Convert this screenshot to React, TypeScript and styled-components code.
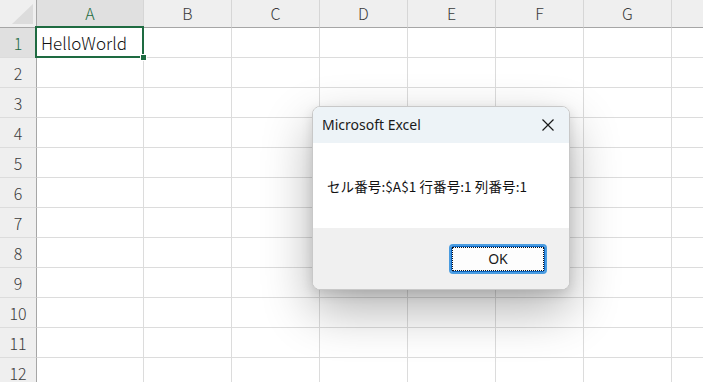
import React from "react";
import styled, { createGlobalStyle } from "styled-components";

const GlobalStyle = createGlobalStyle`
  html, body { margin: 0; padding: 0; background: #ffffff; overflow: hidden; }
  body { width: 703px; height: 382px; }
  * { box-sizing: border-box; }
`;

const COLS = ["A", "B", "C", "D", "E", "F", "G", "H"];
const ROWS = Array.from({ length: 12 }, (_, i) => i + 1);

const Page = styled.div`
  position: relative;
  width: 703px;
  height: 382px;
  overflow: hidden;
  font-family: "Noto Sans CJK JP", "Noto Sans", sans-serif;
`;

const Sheet = styled.div`
  display: grid;
  grid-template-columns: 37px 107px repeat(7, 88px);
  grid-template-rows: 28px repeat(12, 30px);
  background: #ffffff;
`;

const Corner = styled.div`
  position: relative;
  background: #efefef;
  border-right: 1px solid #a6a6a6;
  border-bottom: 1px solid #a6a6a6;
  display: flex;
  align-items: flex-end;
  justify-content: flex-end;
  padding: 0 3px 3px 0;
`;

const CornerTriangle = styled.div`
  width: 21px;
  height: 20px;
  background: #dcdcdc;
  clip-path: polygon(100% 0, 100% 100%, 0 100%);
`;

const ColHeader = styled.div<{ $active?: boolean }>`
  display: flex;
  align-items: center;
  justify-content: center;
  background: ${(p) => (p.$active ? "#e0e0e0" : "#efefef")};
  color: ${(p) => (p.$active ? "#1e6b41" : "#3b3b3b")};
  border-right: 1px solid #d6d6d6;
  border-bottom: 1px solid #a6a6a6;
  font-size: 16px;
  font-weight: 300;
  padding-bottom: 1px;
`;

const RowHeader = styled.div<{ $active?: boolean }>`
  display: flex;
  align-items: center;
  justify-content: center;
  background: ${(p) => (p.$active ? "#e0e0e0" : "#efefef")};
  color: ${(p) => (p.$active ? "#1e6b41" : "#3b3b3b")};
  border-right: 1px solid #a6a6a6;
  border-bottom: 1px solid #dcdcdc;
  font-size: 16px;
  font-weight: 300;
`;

const Cell = styled.div<{ $selected?: boolean }>`
  position: relative;
  z-index: ${(p) => (p.$selected ? 2 : "auto")};
  display: flex;
  align-items: center;
  border-right: 1px solid #dcdcdc;
  border-bottom: 1px solid #dcdcdc;
  padding-left: 4px;
  font-size: 17px;
  font-weight: 300;
  color: #111111;
  white-space: nowrap;
`;

const Selection = styled.div`
  position: absolute;
  left: -2px;
  top: -2px;
  right: -1px;
  bottom: -1px;
  border: 2px solid #1e6b41;
  pointer-events: none;
`;

const FillHandle = styled.div`
  position: absolute;
  right: -4px;
  bottom: -4px;
  width: 7px;
  height: 7px;
  background: #1e6b41;
  border: 1px solid #ffffff;
`;

const Dialog = styled.div`
  position: absolute;
  left: 312px;
  top: 106px;
  width: 258px;
  height: 184px;
  display: flex;
  flex-direction: column;
  border: 1px solid #c8c8c8;
  border-radius: 8px;
  overflow: hidden;
  background: #ffffff;
  box-shadow: 0 20px 50px rgba(0, 0, 0, 0.3), 0 4px 12px rgba(0, 0, 0, 0.12);
  font-family: "Noto Sans", "Noto Sans CJK JP", sans-serif;
`;

const TitleBar = styled.div`
  height: 36px;
  display: flex;
  align-items: center;
  justify-content: space-between;
  background: #edf3f7;
  padding: 0 14px 0 9px;
`;

const Title = styled.span`
  font-size: 14px;
  color: #1a1a1a;
  padding-bottom: 1px;
`;

const CloseButton = styled.button`
  border: none;
  background: transparent;
  padding: 0;
  width: 14px;
  height: 14px;
  display: flex;
  align-items: center;
  justify-content: center;
`;

const Body = styled.div`
  height: 85px;
  display: flex;
  align-items: center;
  padding: 0 0 0 14px;
  background: #ffffff;
`;

const Message = styled.span`
  font-family: "Noto Sans CJK JP", sans-serif;
  font-size: 13.5px;
  color: #111111;
  letter-spacing: 0.1px;
`;

const Footer = styled.div`
  flex: 1;
  display: flex;
  align-items: center;
  justify-content: flex-end;
  padding-right: 22px;
  background: #f0f0f0;
`;

const OkButton = styled.button`
  position: relative;
  width: 98px;
  height: 30px;
  border: 2px solid #4a9ce0;
  border-radius: 4px;
  background: #fdfdfd;
  font-family: "Noto Sans", sans-serif;
  font-size: 14px;
  color: #1a1a1a;
  padding: 0;
  box-shadow: inset 0 0 0 1px #0a64c2;
`;

const FocusRing = styled.span`
  position: absolute;
  inset: 1px;
  border: 1px dotted #111111;
  pointer-events: none;
`;

export default function App() {
  return (
    <Page>
      <GlobalStyle />
      <Sheet>
        <Corner>
          <CornerTriangle />
        </Corner>
        {COLS.map((c) => (
          <ColHeader key={c} $active={c === "A"}>
            {c === "H" ? "" : c}
          </ColHeader>
        ))}
        {ROWS.map((r) => (
          <React.Fragment key={r}>
            <RowHeader $active={r === 1}>{r}</RowHeader>
            {COLS.map((c) => {
              const selected = r === 1 && c === "A";
              return (
                <Cell key={c + r} $selected={selected}>
                  {selected && (
                    <>
                      HelloWorld
                      <Selection />
                      <FillHandle />
                    </>
                  )}
                </Cell>
              );
            })}
          </React.Fragment>
        ))}
      </Sheet>

      <Dialog>
        <TitleBar>
          <Title>Microsoft Excel</Title>
          <CloseButton aria-label="close">
            <svg width="14" height="14" viewBox="0 0 14 14">
              <path d="M1.5 1.5 L12.5 12.5 M12.5 1.5 L1.5 12.5" stroke="#1a1a1a" strokeWidth="1.2" fill="none" />
            </svg>
          </CloseButton>
        </TitleBar>
        <Body>
          <Message>セル番号:$A$1 行番号:1 列番号:1</Message>
        </Body>
        <Footer>
          <OkButton>
            OK
            <FocusRing />
          </OkButton>
        </Footer>
      </Dialog>
    </Page>
  );
}
